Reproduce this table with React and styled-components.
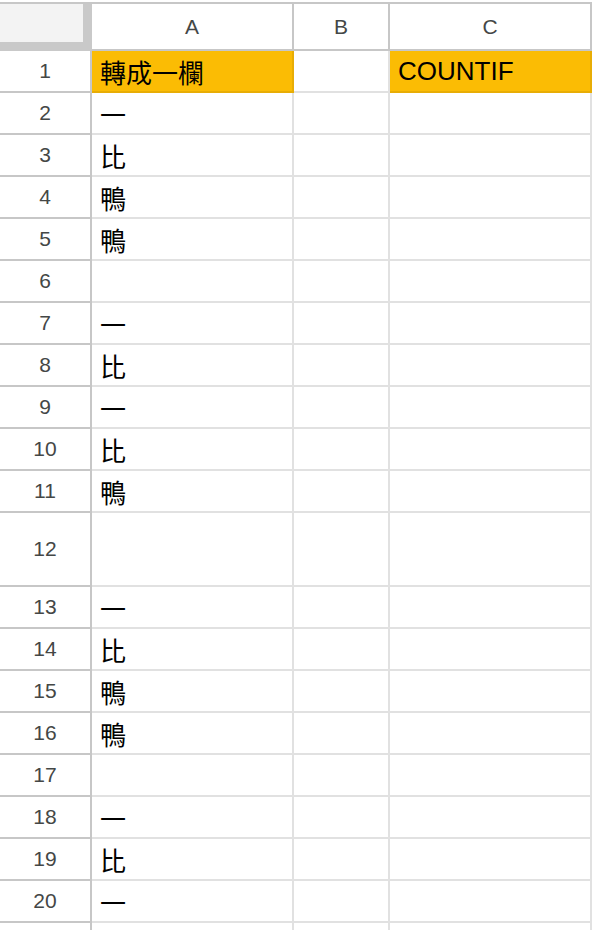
import React from 'react';
import styled, { createGlobalStyle } from 'styled-components';

const GlobalStyle = createGlobalStyle`
  html, body {
    margin: 0;
    padding: 0;
    background: #ffffff;
  }
  body {
    font-family: "Liberation Sans", "Noto Sans CJK TC", sans-serif;
    overflow: hidden;
  }
`;

const HEADER_LINE = '#c7c7c7';
const GRID_LINE = '#e1e1e1';
const COLUMNS = '92px 202px 96px 202px';

const Sheet = styled.div`
  margin-top: 2px;
  width: 592px;
  height: 928px;
  overflow: hidden;
  border-top: 2px solid ${HEADER_LINE};
  box-sizing: border-box;
`;

const Row = styled.div`
  display: grid;
  grid-template-columns: ${COLUMNS};
  height: ${p => p.$height}px;
`;

const Corner = styled.div`
  box-sizing: border-box;
  background: #c9c9c9;
  padding: 0 9px 9px 0;
  height: 100%;
`;

const CornerFill = styled.div`
  width: 100%;
  height: 100%;
  background: #f3f3f3;
`;

const ColHeader = styled.div`
  box-sizing: border-box;
  display: flex;
  align-items: center;
  justify-content: center;
  border-right: 2px solid ${HEADER_LINE};
  border-bottom: 2px solid ${HEADER_LINE};
  font-size: 21px;
  color: #444746;
  padding-top: 1px;
`;

const RowHeader = styled.div`
  box-sizing: border-box;
  display: flex;
  align-items: center;
  justify-content: center;
  border-right: 2px solid ${HEADER_LINE};
  border-bottom: 2px solid ${HEADER_LINE};
  font-size: 21px;
  color: #444746;
`;

const Cell = styled.div`
  box-sizing: border-box;
  display: flex;
  align-items: center;
  padding: 0 0 0 8px;
  border-right: 2px solid ${p => (p.$fill ? '#e8ad05' : GRID_LINE)};
  border-bottom: 2px solid ${p => (p.$fill ? '#e8ad05' : GRID_LINE)};
  background: ${p => p.$fill || '#ffffff'};
  font-size: 26px;
  color: #000000;
  white-space: nowrap;
  overflow: hidden;
`;

const YELLOW = '#fbbc04';

const rows = [
  { a: '轉成一欄', c: 'COUNTIF', fill: true },
  { a: '一' },
  { a: '比' },
  { a: '鴨' },
  { a: '鴨' },
  { a: '' },
  { a: '一' },
  { a: '比' },
  { a: '一' },
  { a: '比' },
  { a: '鴨' },
  { a: '', height: 74 },
  { a: '一' },
  { a: '比' },
  { a: '鴨' },
  { a: '鴨' },
  { a: '' },
  { a: '一' },
  { a: '比' },
  { a: '一' },
];

const App = () => (
  <>
    <GlobalStyle />
    <Sheet>
      <Row $height={47}>
        <Corner>
          <CornerFill />
        </Corner>
        <ColHeader>A</ColHeader>
        <ColHeader>B</ColHeader>
        <ColHeader>C</ColHeader>
      </Row>
      {rows.map((r, i) => (
        <Row key={i} $height={r.height || 42}>
          <RowHeader>{i + 1}</RowHeader>
          <Cell $fill={r.fill ? YELLOW : null}>{r.a}</Cell>
          <Cell />
          <Cell $fill={r.fill ? YELLOW : null}>{r.c}</Cell>
        </Row>
      ))}
      {/* partial next row, cut by the window edge */}
      <Row $height={42}>
        <RowHeader />
        <Cell />
        <Cell />
        <Cell />
      </Row>
    </Sheet>
  </>
);

export default App;
